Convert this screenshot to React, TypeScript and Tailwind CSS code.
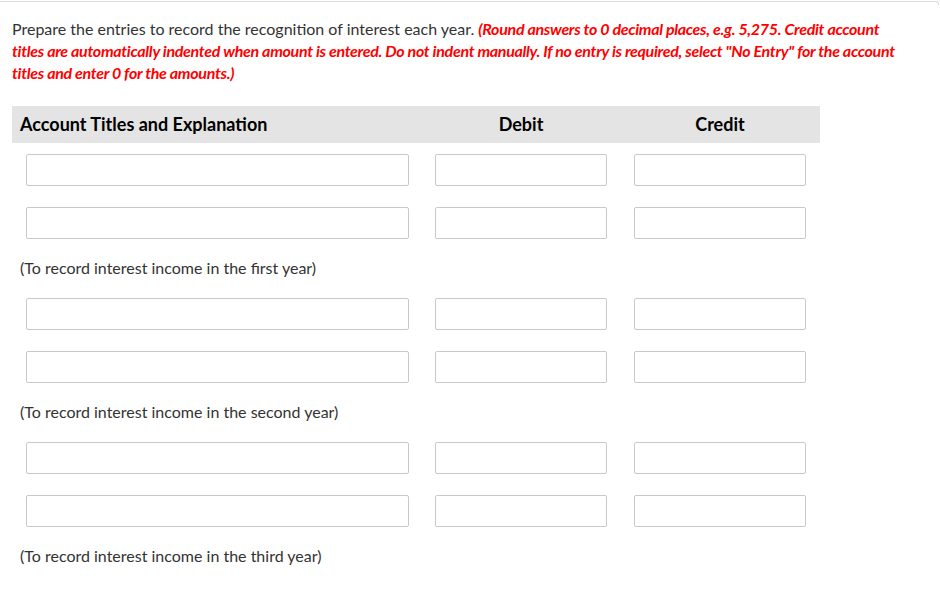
import React from "react";

const Input = ({ w }: { w: string }) => (
  <div className={`${w} h-[32px] border border-[#c9c9c9] rounded-[2px] bg-white`} />
);

const InputRow = () => (
  <div className="flex h-[53px] pt-[11px]">
    <div className="w-[410px] pl-[14px]">
      <Input w="w-[383px]" />
    </div>
    <div className="w-[198px] pl-[13px]">
      <Input w="w-[172px]" />
    </div>
    <div className="w-[200px] pl-[14px]">
      <Input w="w-[172px]" />
    </div>
  </div>
);

const Group = ({ label }: { label: string }) => (
  <div>
    <InputRow />
    <InputRow />
    <div className="h-[38px] flex items-center pl-[8px] text-[16px] text-[#333]">{label}</div>
  </div>
);

export default function App() {
  return (
    <div
      className="w-[940px] h-[593px] bg-white overflow-hidden"
      style={{ fontFamily: "Lato, 'Open Sans', sans-serif" }}
    >
      <div className="mt-[1px] w-[939px] h-[4px] border-t border-r border-[#dcdcdc] rounded-tr-[3px]" />
      <div className="pl-[12px] pr-[30px] pt-[13px] text-[16px] leading-[22px] text-[#333]">
        Prepare the entries to record the recognition of interest each year.{" "}
        <span className="text-[#ff0000] font-bold italic tracking-[-0.3px]">
          (Round answers to 0 decimal places, e.g. 5,275. Credit account titles are automatically indented when amount is entered. Do not indent manually. If no entry is required, select "No Entry" for the account titles and enter 0 for the amounts.)
        </span>
      </div>
      <div className="ml-[12px] mt-[22px] w-[808px]">
        <div className="flex h-[37px] items-center bg-[#e4e4e4] text-[18px] font-bold text-black">
          <div className="w-[410px] pl-[8px]">Account Titles and Explanation</div>
          <div className="w-[198px] text-center">Debit</div>
          <div className="w-[200px] text-center">Credit</div>
        </div>
        <Group label="(To record interest income in the first year)" />
        <Group label="(To record interest income in the second year)" />
        <Group label="(To record interest income in the third year)" />
      </div>
    </div>
  );
}
